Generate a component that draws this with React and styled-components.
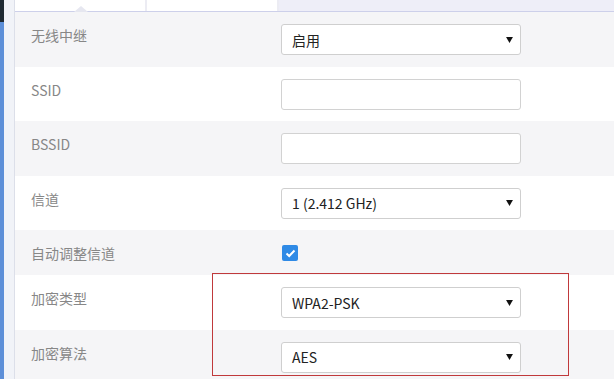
import React from "react"
import styled, { createGlobalStyle } from "styled-components"

const GlobalStyle = createGlobalStyle`
  html, body {
    margin: 0;
    padding: 0;
    background: #ffffff;
  }
  body {
    font-family: "Noto Sans CJK SC", "Noto Sans", sans-serif;
    width: 614px;
    height: 379px;
    overflow: hidden;
  }
`

const rows = [
  { label: "无线中继", type: "select", value: "启用" },
  { label: "SSID", type: "input" },
  { label: "BSSID", type: "input" },
  { label: "信道", type: "select", value: "1 (2.412 GHz)" },
  { label: "自动调整信道", type: "check" },
  { label: "加密类型", type: "select", value: "WPA2-PSK" },
  { label: "加密算法", type: "select", value: "AES" },
]

export default function App() {
  return (
    <>
      <GlobalStyle />
      <Page>
        <SideStrip />
        <Gutter />
        <Main>
          <TabBar>
            <Tab $caret />
            <Tab />
            <TabRest />
          </TabBar>
          <Form>
            {rows.map((row, i) => (
              <Row key={row.label} $alt={i % 2 === 0} $short={row.type === "check"}>
                <Label>{row.label}</Label>
                <Field>
                  {row.type === "select" && (
                    <Select>
                      <span>{row.value}</span>
                      <Arrow viewBox="0 0 8 7">
                        <path d="M0 0 H8 L4 7 Z" fill="#111" />
                      </Arrow>
                    </Select>
                  )}
                  {row.type === "input" && <Input />}
                  {row.type === "check" && (
                    <Check>
                      <svg width="11" height="9" viewBox="0 0 11 9">
                        <path d="M1.5 4.5 L4.2 7 L9.5 1.5" fill="none" stroke="#fff" strokeWidth="2" />
                      </svg>
                    </Check>
                  )}
                </Field>
              </Row>
            ))}
          </Form>
          <Highlight />
        </Main>
      </Page>
    </>
  )
}

const Page = styled.div`
  display: flex;
  width: 614px;
  height: 379px;
  overflow: hidden;
`

const SideStrip = styled.div`
  width: 4px;
  flex-shrink: 0;
  background: linear-gradient(to bottom, #1f2a33 0, #1f2a33 22px, #5d8fd8 22px);
`

const Gutter = styled.div`
  width: 10px;
  flex-shrink: 0;
  background: #f1f3f8;
  border-right: 1px solid #dcdfe9;
`

const Main = styled.div`
  position: relative;
  flex: 1;
  display: flex;
  flex-direction: column;
`

const TabBar = styled.div`
  display: flex;
  height: 11px;
  border-bottom: 1px solid #cdd0ea;
  flex-shrink: 0;
`

const Tab = styled.div`
  position: relative;
  width: 130px;
  background: #ffffff;
  border-right: 2px solid #ececf3;

  &::after {
    content: "";
    display: ${(p) => (p.$caret ? "block" : "none")};
    position: absolute;
    left: 59px;
    bottom: -1px;
    border-left: 7px solid transparent;
    border-right: 7px solid transparent;
    border-bottom: 6px solid #e6e7f0;
  }
`

const TabRest = styled.div`
  flex: 1;
  background: #eeeef8;
`

const Form = styled.div`
  display: flex;
  flex-direction: column;
`

const Row = styled.div`
  display: flex;
  align-items: flex-start;
  height: ${(p) => (p.$short ? "45px" : "54.5px")};
  flex-shrink: 0;
  box-sizing: border-box;
  padding-top: 12px;
  background: ${(p) => (p.$alt ? "#f5f5f7" : "#ffffff")};
`

const Label = styled.div`
  width: 250px;
  padding-left: 16px;
  line-height: 22px;
  font-size: 14px;
  color: #878787;
  flex-shrink: 0;
`

const Field = styled.div`
  display: flex;
  align-items: center;
  min-height: 22px;
`

const Select = styled.div`
  display: flex;
  align-items: center;
  justify-content: space-between;
  width: 240px;
  height: 31px;
  box-sizing: border-box;
  padding: 0 7px 0 10px;
  background: #ffffff;
  border: 1px solid #cfcfcf;
  border-radius: 3px;
  font-size: 14px;
  color: #222;
`

const Arrow = styled.svg`
  width: 7px;
  height: 6px;
`

const Input = styled.div`
  width: 240px;
  height: 31px;
  box-sizing: border-box;
  background: #ffffff;
  border: 1px solid #d2d2d2;
  border-radius: 3px;
`

const Check = styled.div`
  display: flex;
  align-items: center;
  justify-content: center;
  width: 16px;
  height: 16px;
  margin-left: 1px;
  border-radius: 2px;
  background: #2f8ae6;
`

const Highlight = styled.div`
  position: absolute;
  left: 197px;
  top: 273px;
  width: 355px;
  height: 101px;
  border: 1px solid #c0393b;
  pointer-events: none;
`
